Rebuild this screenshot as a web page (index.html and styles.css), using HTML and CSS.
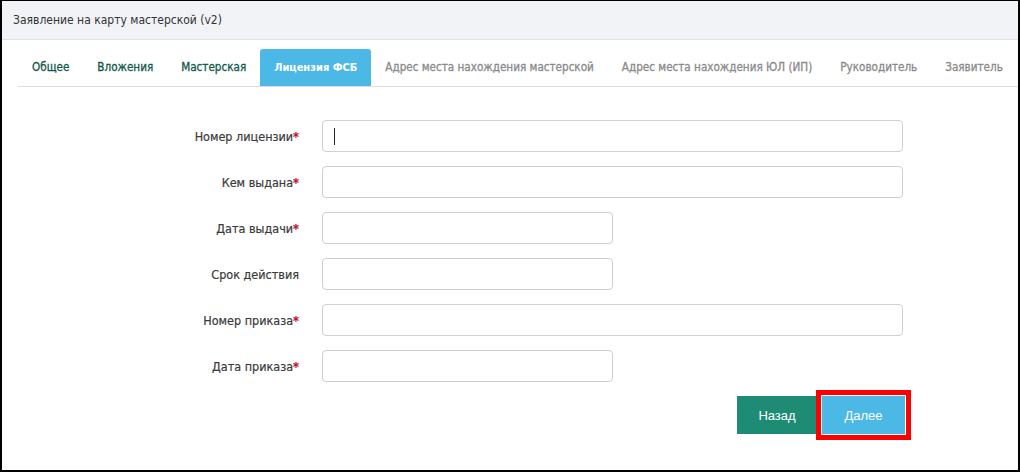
FILE: index.html
```html
<!DOCTYPE html>
<html lang="ru">
<head>
<meta charset="utf-8">
<title>Заявление на карту мастерской (v2)</title>
<link rel="stylesheet" href="styles.css">
</head>
<body>
<div class="frame">
  <div class="header">Заявление на карту мастерской (v2)</div>
  <ul class="tabs">
    <li class="tab done">Общее</li>
    <li class="tab done">Вложения</li>
    <li class="tab done">Мастерская</li>
    <li class="tab active">Лицензия ФСБ</li>
    <li class="tab">Адрес места нахождения мастерской</li>
    <li class="tab">Адрес места нахождения ЮЛ (ИП)</li>
    <li class="tab">Руководитель</li>
    <li class="tab">Заявитель</li>
  </ul>
  <form class="form">
    <label class="label">Номер лицензии<span class="req">*</span></label>
    <div class="field long focus"><input class="input" type="text"><span class="caret"></span></div>
    <label class="label">Кем выдана<span class="req">*</span></label>
    <div class="field long"><input class="input" type="text"></div>
    <label class="label">Дата выдачи<span class="req">*</span></label>
    <div class="field short"><input class="input" type="text"></div>
    <label class="label">Срок действия</label>
    <div class="field short"><input class="input" type="text"></div>
    <label class="label">Номер приказа<span class="req">*</span></label>
    <div class="field long"><input class="input" type="text"></div>
    <label class="label">Дата приказа<span class="req">*</span></label>
    <div class="field short"><input class="input" type="text"></div>
    <div class="actions">
      <button type="button" class="btn back">Назад</button>
      <button type="button" class="btn next">Далее</button>
    </div>
  </form>
</div>
</body>
</html>
```

FILE: styles.css
```css
html, body {
  margin: 0;
  padding: 0;
  background: #fff;
}
body {
  font-family: "DejaVu Sans Condensed", "DejaVu Sans", sans-serif;
  font-size: 12px;
  color: #333;
}
.frame {
  box-sizing: border-box;
  width: 1020px;
  height: 472px;
  border-top: 1px solid #000;
  border-left: 2px solid #000;
  border-right: 2px solid #000;
  border-bottom: 2px solid #000;
  overflow: hidden;
}
.header {
  height: 38px;
  line-height: 38px;
  background: #f1f3f7;
  border-bottom: 1px solid #dde1e8;
  padding-left: 11px;
  font-size: 12px;
  color: #333;
}
.tabs {
  list-style: none;
  margin: 9px 0 0 16px;
  padding: 0;
  display: flex;
  border-bottom: 1px solid #dcdcdc;
}
.tab {
  height: 37px;
  line-height: 37px;
  padding: 0 14px;
  font-size: 11.6px;
  font-weight: normal;
  -webkit-text-stroke: 0.3px currentColor;
  color: #8a8a8a;
  white-space: nowrap;
  border-radius: 3px 3px 0 0;
}
.tab.done {
  color: #12594a;
}
.tab.active {
  background: #4cb8e5;
  color: #fff;
  font-weight: bold;
  -webkit-text-stroke: 0;
  font-size: 11px;
}
.form {
  display: grid;
  grid-template-columns: 298px auto;
  column-gap: 22px;
  row-gap: 14px;
  margin-top: 33px;
  align-items: center;
}
.label {
  text-align: right;
  font-size: 12.5px;
  -webkit-text-stroke: 0.2px currentColor;
  color: #3a3a3a;
  padding-right: 1px;
}
.req {
  color: #c8102e;
  font-weight: bold;
}
.field {
  position: relative;
  height: 32px;
}
.field.long { width: 581px; }
.field.short { width: 291px; }
.input {
  box-sizing: border-box;
  width: 100%;
  height: 32px;
  border: 1px solid #cfcfcf;
  border-radius: 4px;
  padding: 0 12px;
  font: inherit;
  outline: none;
  background: #fff;
}
.caret {
  position: absolute;
  left: 12px;
  top: 8px;
  width: 1px;
  height: 17px;
  background: #222;
}
.actions {
  grid-column: 2;
  display: flex;
  gap: 5px;
  padding-left: 415px;
}
.btn {
  height: 38px;
  border: none;
  border-radius: 0;
  color: #fff;
  font-family: "Liberation Sans", Arial, sans-serif;
  font-size: 13px;
  padding: 0;
  cursor: pointer;
}
.btn.back {
  width: 80px;
  background: #1e8c74;
}
.btn.next {
  width: 83px;
  background: #4cb8e5;
  outline: 5px solid #ff0000;
  outline-offset: 1px;
}
```
